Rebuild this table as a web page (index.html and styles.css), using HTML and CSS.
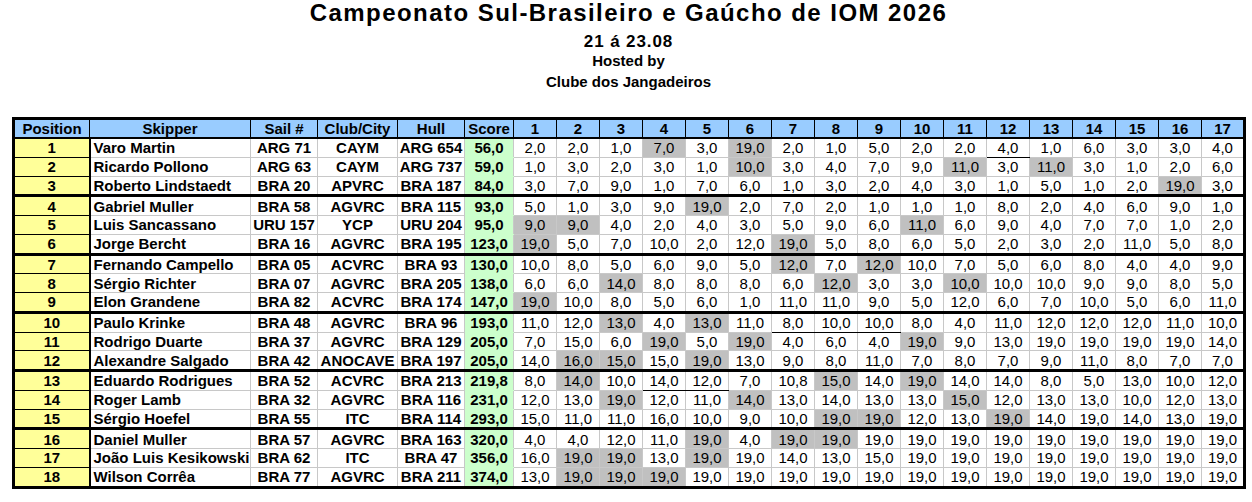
FILE: index.html
```html
<!DOCTYPE html>
<html lang="pt">
<head>
<meta charset="utf-8">
<title>Campeonato Sul-Brasileiro e Gaúcho de IOM 2026</title>
<link rel="stylesheet" href="styles.css">
</head>
<body>
<div class="page">
  <header class="heading">
    <h1 class="title">Campeonato Sul-Brasileiro e Gaúcho de IOM 2026</h1>
    <p class="dates">21 á 23.08</p>
    <p class="host">Hosted by</p>
    <p class="host club">Clube dos Jangadeiros</p>
  </header>
  <table class="results">
    <colgroup>
      <col class="c-pos"><col class="c-skip"><col class="c-sail"><col class="c-club"><col class="c-hull"><col class="c-score">
      <col class="c-race"><col class="c-race"><col class="c-race"><col class="c-race"><col class="c-race"><col class="c-race"><col class="c-race"><col class="c-race"><col class="c-race"><col class="c-race"><col class="c-race"><col class="c-race"><col class="c-race"><col class="c-race"><col class="c-race"><col class="c-race"><col class="c-race">
    </colgroup>
    <thead>
      <tr><th>Position</th><th>Skipper</th><th>Sail #</th><th>Club/City</th><th>Hull</th><th>Score</th><th>1</th><th>2</th><th>3</th><th>4</th><th>5</th><th>6</th><th>7</th><th>8</th><th>9</th><th>10</th><th>11</th><th>12</th><th>13</th><th>14</th><th>15</th><th>16</th><th>17</th></tr>
    </thead>
    <tbody>
      <tr><td class="pos">1</td><td class="name">Varo Martin</td><td class="b">ARG 71</td><td class="b">CAYM</td><td class="b">ARG 654</td><td class="score">56,0</td><td>2,0</td><td>2,0</td><td>1,0</td><td class="d">7,0</td><td>3,0</td><td class="d">19,0</td><td>2,0</td><td>1,0</td><td>5,0</td><td>2,0</td><td>2,0</td><td class="bk">4,0</td><td>1,0</td><td>6,0</td><td>3,0</td><td>3,0</td><td>4,0</td></tr>
      <tr><td class="pos">2</td><td class="name">Ricardo Pollono</td><td class="b">ARG 63</td><td class="b">CAYM</td><td class="b">ARG 737</td><td class="score">59,0</td><td>1,0</td><td>3,0</td><td>2,0</td><td>3,0</td><td>1,0</td><td class="d">10,0</td><td>3,0</td><td>4,0</td><td>7,0</td><td>9,0</td><td class="d">11,0</td><td>3,0</td><td class="d">11,0</td><td>3,0</td><td>1,0</td><td>2,0</td><td>6,0</td></tr>
      <tr class="grp"><td class="pos">3</td><td class="name">Roberto Lindstaedt</td><td class="b">BRA 20</td><td class="b">APVRC</td><td class="b">BRA 187</td><td class="score">84,0</td><td>3,0</td><td>7,0</td><td>9,0</td><td>1,0</td><td>7,0</td><td>6,0</td><td>1,0</td><td>3,0</td><td>2,0</td><td>4,0</td><td>3,0</td><td>1,0</td><td>5,0</td><td>1,0</td><td>2,0</td><td class="d">19,0</td><td>3,0</td></tr>
      <tr><td class="pos">4</td><td class="name">Gabriel Muller</td><td class="b">BRA 58</td><td class="b">AGVRC</td><td class="b">BRA 115</td><td class="score">93,0</td><td>5,0</td><td>1,0</td><td>3,0</td><td>9,0</td><td class="d">19,0</td><td>2,0</td><td>7,0</td><td>2,0</td><td>1,0</td><td>1,0</td><td>1,0</td><td>8,0</td><td>2,0</td><td>4,0</td><td>6,0</td><td>9,0</td><td>1,0</td></tr>
      <tr><td class="pos">5</td><td class="name">Luis Sancassano</td><td class="b">URU 157</td><td class="b">YCP</td><td class="b">URU 204</td><td class="score">95,0</td><td class="d">9,0</td><td class="d">9,0</td><td>4,0</td><td>2,0</td><td>4,0</td><td>3,0</td><td>5,0</td><td>9,0</td><td>6,0</td><td class="d">11,0</td><td>6,0</td><td>9,0</td><td>4,0</td><td>7,0</td><td>7,0</td><td>1,0</td><td>2,0</td></tr>
      <tr class="grp"><td class="pos">6</td><td class="name">Jorge Bercht</td><td class="b">BRA 16</td><td class="b">AGVRC</td><td class="b">BRA 195</td><td class="score">123,0</td><td class="d">19,0</td><td>5,0</td><td>7,0</td><td>10,0</td><td>2,0</td><td>12,0</td><td class="d">19,0</td><td>5,0</td><td>8,0</td><td>6,0</td><td>5,0</td><td>2,0</td><td>3,0</td><td>2,0</td><td>11,0</td><td>5,0</td><td>8,0</td></tr>
      <tr><td class="pos">7</td><td class="name">Fernando Campello</td><td class="b">BRA 05</td><td class="b">ACVRC</td><td class="b">BRA 93</td><td class="score">130,0</td><td>10,0</td><td>8,0</td><td>5,0</td><td>6,0</td><td>9,0</td><td>5,0</td><td class="d">12,0</td><td>7,0</td><td class="d">12,0</td><td>10,0</td><td>7,0</td><td>5,0</td><td>6,0</td><td>8,0</td><td>4,0</td><td>4,0</td><td>9,0</td></tr>
      <tr><td class="pos">8</td><td class="name">Sérgio Richter</td><td class="b">BRA 07</td><td class="b">AGVRC</td><td class="b">BRA 205</td><td class="score">138,0</td><td>6,0</td><td>6,0</td><td class="d">14,0</td><td>8,0</td><td>8,0</td><td>8,0</td><td>6,0</td><td class="d">12,0</td><td>3,0</td><td>3,0</td><td class="d">10,0</td><td>10,0</td><td>10,0</td><td>9,0</td><td>9,0</td><td>8,0</td><td>5,0</td></tr>
      <tr class="grp"><td class="pos">9</td><td class="name">Elon Grandene</td><td class="b">BRA 82</td><td class="b">ACVRC</td><td class="b">BRA 174</td><td class="score">147,0</td><td class="d">19,0</td><td>10,0</td><td>8,0</td><td>5,0</td><td>6,0</td><td>1,0</td><td>11,0</td><td>11,0</td><td>9,0</td><td>5,0</td><td>12,0</td><td>6,0</td><td>7,0</td><td>10,0</td><td>5,0</td><td>6,0</td><td>11,0</td></tr>
      <tr><td class="pos">10</td><td class="name">Paulo Krinke</td><td class="b">BRA 48</td><td class="b">AGVRC</td><td class="b">BRA 96</td><td class="score">193,0</td><td>11,0</td><td>12,0</td><td class="d">13,0</td><td>4,0</td><td class="d">13,0</td><td>11,0</td><td class="bk">8,0</td><td class="bk">10,0</td><td class="bk">10,0</td><td>8,0</td><td>4,0</td><td>11,0</td><td>12,0</td><td>12,0</td><td>12,0</td><td>11,0</td><td>10,0</td></tr>
      <tr><td class="pos">11</td><td class="name">Rodrigo Duarte</td><td class="b">BRA 37</td><td class="b">AGVRC</td><td class="b">BRA 129</td><td class="score">205,0</td><td>7,0</td><td>15,0</td><td>6,0</td><td class="d">19,0</td><td>5,0</td><td class="d">19,0</td><td>4,0</td><td>6,0</td><td>4,0</td><td class="d">19,0</td><td>9,0</td><td>13,0</td><td>19,0</td><td>19,0</td><td>19,0</td><td>19,0</td><td>14,0</td></tr>
      <tr class="grp"><td class="pos">12</td><td class="name">Alexandre Salgado</td><td class="b">BRA 42</td><td class="b">ANOCAVE</td><td class="b">BRA 197</td><td class="score">205,0</td><td>14,0</td><td class="d">16,0</td><td class="d">15,0</td><td>15,0</td><td class="d">19,0</td><td>13,0</td><td>9,0</td><td>8,0</td><td>11,0</td><td>7,0</td><td>8,0</td><td>7,0</td><td>9,0</td><td>11,0</td><td>8,0</td><td>7,0</td><td>7,0</td></tr>
      <tr><td class="pos">13</td><td class="name">Eduardo Rodrigues</td><td class="b">BRA 52</td><td class="b">ACVRC</td><td class="b">BRA 213</td><td class="score">219,8</td><td>8,0</td><td class="d">14,0</td><td>10,0</td><td class="bk">14,0</td><td class="bk">12,0</td><td>7,0</td><td>10,8</td><td class="d">15,0</td><td>14,0</td><td class="d">19,0</td><td>14,0</td><td>14,0</td><td>8,0</td><td>5,0</td><td>13,0</td><td>10,0</td><td>12,0</td></tr>
      <tr><td class="pos">14</td><td class="name">Roger Lamb</td><td class="b">BRA 32</td><td class="b">AGVRC</td><td class="b">BRA 116</td><td class="score">231,0</td><td>12,0</td><td>13,0</td><td class="d">19,0</td><td>12,0</td><td>11,0</td><td class="d">14,0</td><td>13,0</td><td>14,0</td><td>13,0</td><td>13,0</td><td class="d">15,0</td><td>12,0</td><td>13,0</td><td>13,0</td><td>10,0</td><td>12,0</td><td>13,0</td></tr>
      <tr class="grp"><td class="pos">15</td><td class="name">Sérgio Hoefel</td><td class="b">BRA 55</td><td class="b">ITC</td><td class="b">BRA 114</td><td class="score">293,0</td><td>15,0</td><td>11,0</td><td>11,0</td><td>16,0</td><td>10,0</td><td>9,0</td><td>10,0</td><td class="d">19,0</td><td class="d">19,0</td><td>12,0</td><td>13,0</td><td class="d">19,0</td><td>14,0</td><td>19,0</td><td>14,0</td><td>13,0</td><td>19,0</td></tr>
      <tr><td class="pos">16</td><td class="name">Daniel Muller</td><td class="b">BRA 57</td><td class="b">AGVRC</td><td class="b">BRA 163</td><td class="score">320,0</td><td>4,0</td><td>4,0</td><td>12,0</td><td>11,0</td><td class="d">19,0</td><td>4,0</td><td class="d">19,0</td><td class="d">19,0</td><td>19,0</td><td>19,0</td><td>19,0</td><td>19,0</td><td>19,0</td><td>19,0</td><td>19,0</td><td>19,0</td><td>19,0</td></tr>
      <tr><td class="pos">17</td><td class="name">João Luis Kesikowski</td><td class="b">BRA 62</td><td class="b">ITC</td><td class="b">BRA 47</td><td class="score">356,0</td><td>16,0</td><td class="d">19,0</td><td class="d">19,0</td><td>13,0</td><td class="d">19,0</td><td>19,0</td><td>14,0</td><td>13,0</td><td>15,0</td><td>19,0</td><td>19,0</td><td>19,0</td><td>19,0</td><td>19,0</td><td>19,0</td><td>19,0</td><td>19,0</td></tr>
      <tr><td class="pos">18</td><td class="name">Wilson Corrêa</td><td class="b">BRA 77</td><td class="b">AGVRC</td><td class="b">BRA 211</td><td class="score">374,0</td><td>13,0</td><td class="d">19,0</td><td class="d">19,0</td><td class="d">19,0</td><td>19,0</td><td>19,0</td><td>19,0</td><td>19,0</td><td>19,0</td><td>19,0</td><td>19,0</td><td>19,0</td><td>19,0</td><td>19,0</td><td>19,0</td><td>19,0</td><td>19,0</td></tr>
    </tbody>
  </table>
</div>
</body>
</html>
```

FILE: styles.css
```css
html, body {
  margin: 0;
  padding: 0;
  background: #ffffff;
}

body {
  font-family: "Liberation Sans", Arial, sans-serif;
  color: #000000;
}

.page {
  width: 1233px;
  margin-left: 12px;
}

.heading {
  text-align: center;
  padding-top: 2px;
}

.title {
  margin: 0;
  font-size: 24px;
  line-height: 22px;
  letter-spacing: 1.45px;
  font-weight: bold;
}

.dates {
  margin: 9px 0 0;
  font-size: 17px;
  line-height: 18px;
  letter-spacing: 0.9px;
  font-weight: bold;
}

.host {
  margin: 1px 0 0;
  font-size: 15px;
  line-height: 18px;
  font-weight: bold;
}

.host.club {
  margin-top: 3px;
}

.results {
  margin-top: 26px;
  width: 1233px;
  table-layout: fixed;
  border-collapse: collapse;
  border: 3px solid #000000;
  font-size: 15px;
}

.c-pos { width: 76px; }
.c-skip { width: 161px; }
.c-sail { width: 67px; }
.c-club { width: 80px; }
.c-hull { width: 67px; }
.c-score { width: 49px; }
.c-race { width: 43px; }

.results th,
.results td {
  padding: 0;
  height: 17.75px;
  line-height: 17px;
  text-align: center;
  white-space: nowrap;
  overflow: hidden;
  border: 1px solid #c8c8c8;
}

.results th {
  height: 16.5px;
  background: #99ccff;
  font-weight: bold;
  border: 1px solid #000000;
  border-bottom: 2px solid #000000;
}

.results td.pos {
  background: #ffff99;
  font-weight: bold;
  border: 1px solid #000000;
  border-right: 2px solid #000000;
}

.results td.name {
  text-align: left;
  padding-left: 3px;
  font-weight: bold;
}

.results td.b {
  font-weight: bold;
}

.results td.score {
  background: #ccffcc;
  font-weight: bold;
  border-top-color: #ccffcc;
  border-bottom-color: #ccffcc;
}

.results td.d {
  background: #c0c0c0;
}

.results td.bk {
  border-bottom: 1px solid #000000;
}

.results tr.grp td {
  border-bottom: 3px solid #000000;
}
```
